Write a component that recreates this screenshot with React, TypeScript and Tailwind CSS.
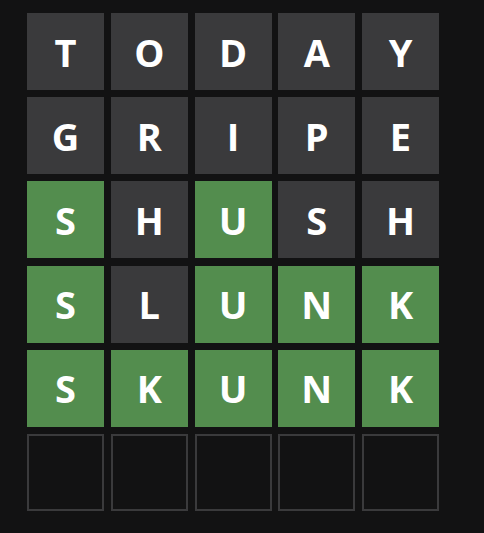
import React from "react";

type S = "c" | "a" | "e";
const rows: { l: string; s: S }[][] = [
  "TODAY".split("").map((l) => ({ l, s: "a" as S })),
  "GRIPE".split("").map((l) => ({ l, s: "a" as S })),
  [
    { l: "S", s: "c" },
    { l: "H", s: "a" },
    { l: "U", s: "c" },
    { l: "S", s: "a" },
    { l: "H", s: "a" },
  ],
  [
    { l: "S", s: "c" },
    { l: "L", s: "a" },
    { l: "U", s: "c" },
    { l: "N", s: "c" },
    { l: "K", s: "c" },
  ],
  "SKUNK".split("").map((l) => ({ l, s: "c" as S })),
  [0, 1, 2, 3, 4].map(() => ({ l: "", s: "e" as S })),
];

export default function App() {
  return (
    <div className="min-h-screen w-full bg-[#121213] pl-[27px] pt-[13px]">
      <div
        className="grid w-[412px] h-[498px] grid-cols-5 grid-rows-6 gap-x-[6.75px] gap-y-[7.2px]"
        style={{ fontFamily: '"Open Sans", "Liberation Sans", Arial, sans-serif' }}
      >
        {rows.flat().map((t, i) => (
          <div
            key={i}
            className={
              t.s === "c"
                ? "flex items-center justify-center bg-[#538d4e] text-white font-bold text-[38px] leading-none"
                : t.s === "a"
                ? "flex items-center justify-center bg-[#3a3a3c] text-white font-bold text-[38px] leading-none"
                : "flex items-center justify-center border-2 border-[#3a3a3c]"
            }
          >
            {t.l}
          </div>
        ))}
      </div>
    </div>
  );
}
